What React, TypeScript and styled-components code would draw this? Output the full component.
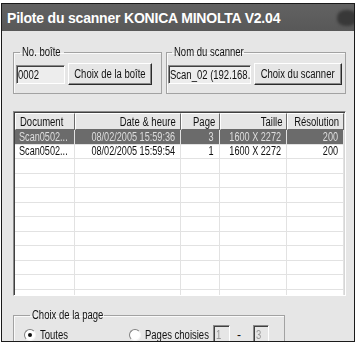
import styled, { createGlobalStyle } from 'styled-components';

const GlobalStyle = createGlobalStyle`
  html, body {
    margin: 0;
    padding: 0;
    background: #fff;
  }
  body {
    font-family: "Liberation Sans", Arial, sans-serif;
    color: #111;
  }
`;

// the dialog in the capture is squeezed sideways, so text is narrowed to match
const Txt = styled.span<{ $origin?: string }>`
  display: inline-block;
  white-space: nowrap;
  transform: scaleX(0.76);
  transform-origin: ${p => p.$origin ?? 'center'};
`;

const Window = styled.div`
  box-sizing: border-box;
  margin: 3px 0 0 1px;
  width: 354px;
  height: 339px;
  border: 1px solid #1a1a1a;
  background: #e6e6e6;
  overflow: hidden;
  display: flex;
  flex-direction: column;
`;

const TitleBar = styled.div`
  flex-shrink: 0;
  height: 27px;
  display: flex;
  align-items: center;
  padding-left: 5px;
  background: linear-gradient(#626262, #585858);
  color: #fff;
  font-family: "Liberation Sans Narrow", "Liberation Sans", Arial, sans-serif;
  font-weight: bold;
  font-size: 14px;
  letter-spacing: -0.2px;
`;

const TitleText = styled.span`
  flex: 1;
  white-space: nowrap;
`;

const CloseSpot = styled.span`
  width: 20px;
  height: 16px;
  margin-right: -3px;
  border-radius: 45%;
  background: #383838;
  filter: blur(1.5px);
`;

const Body = styled.div`
  display: flex;
  flex-direction: column;
  padding: 15px 8px 0 11px;
`;

const TopRow = styled.div`
  display: flex;
  gap: 4px;
`;

const Group = styled.fieldset<{ $w: number; $pad: string }>`
  box-sizing: border-box;
  width: ${p => p.$w}px;
  margin: 0;
  padding: ${p => p.$pad};
  border: 1px solid #a2a2a2;
  box-shadow: inset 1px 1px 0 #fafafa;
  display: flex;
  align-items: center;
  gap: 3px;
`;

const Legend = styled.legend<{ $w: number; $ml?: number }>`
  box-sizing: border-box;
  width: ${p => p.$w}px;
  margin-left: ${p => p.$ml ?? 4}px;
  padding: 0 2px;
  font-size: 12.5px;
  line-height: 12px;
  overflow: visible;
`;

const TextBox = styled.div<{ $w: number }>`
  box-sizing: border-box;
  width: ${p => p.$w}px;
  height: 19px;
  padding: 2px 0 0 1px;
  border-top: 1px solid #8a8a8a;
  border-left: 1px solid #8a8a8a;
  border-bottom: 1px solid #fff;
  border-right: 1px solid #fff;
  box-shadow: inset 1px 1px 0 #404040;
  background: #ededed;
  font-size: 12.5px;
  line-height: 14px;
  white-space: nowrap;
  overflow: hidden;
`;

const Button = styled.div<{ $w: number }>`
  box-sizing: border-box;
  width: ${p => p.$w}px;
  height: 22px;
  display: flex;
  align-items: center;
  justify-content: center;
  background: #e6e6e6;
  border-top: 1px solid #fff;
  border-left: 1px solid #fff;
  border-bottom: 1px solid #2a2a2a;
  border-right: 1px solid #2a2a2a;
  box-shadow: inset -1px -1px 0 #8a8a8a;
  font-size: 12.5px;
`;

const List = styled.div`
  box-sizing: border-box;
  margin-top: 17px;
  height: 185px;
  border-top: 1px solid #8a8a8a;
  border-left: 1px solid #8a8a8a;
  border-bottom: 1px solid #fff;
  border-right: 1px solid #fff;
  box-shadow: inset 1px 1px 0 #404040, inset -1px -1px 0 #d6d6d6;
  padding: 1px;
  background: #fff;
  overflow: hidden;
`;

const columns = '60px 106px 39px 67px 57px';

const HeaderRow = styled.div`
  display: grid;
  grid-template-columns: ${columns};
  height: 17px;
`;

const HeaderCell = styled.div<{ $left?: boolean }>`
  box-sizing: border-box;
  display: flex;
  align-items: center;
  justify-content: ${p => (p.$left ? 'flex-start' : 'flex-end')};
  padding: 0 4px 0 4px;
  background: #e6e6e6;
  border-top: 1px solid #fff;
  border-left: 1px solid #fff;
  border-right: 1px solid #6a6a6a;
  border-bottom: 1px solid #6a6a6a;
  font-size: 12.5px;
`;

const Row = styled.div<{ $selected?: boolean }>`
  display: grid;
  grid-template-columns: ${columns};
  height: 14.5px;
  background: ${p => (p.$selected ? '#6b6b6b' : '#fff')};
  color: ${p => (p.$selected ? '#dedede' : '#111')};
`;

const Cell = styled.div<{ $left?: boolean }>`
  box-sizing: border-box;
  display: flex;
  align-items: center;
  justify-content: ${p => (p.$left ? 'flex-start' : 'flex-end')};
  padding: ${p => (p.$left ? '0 0 0 4px' : '0 5px 0 0')};
  border-right: 1px solid #e2e2e2;
  border-bottom: 1px solid #e2e2e2;
  font-size: 12px;
  overflow: hidden;
`;

const PageGroup = styled.fieldset`
  box-sizing: border-box;
  width: 272px;
  margin: 13px 0 0 0;
  padding: 4px 8px 6px 10px;
  border: 1px solid #a2a2a2;
  box-shadow: inset 1px 1px 0 #fafafa;
  display: flex;
  align-items: center;
`;

const RadioOption = styled.label<{ $w: number }>`
  display: flex;
  align-items: center;
  gap: 4px;
  width: ${p => p.$w}px;
  font-size: 12.5px;
`;

const RadioCircle = styled.span<{ $checked?: boolean }>`
  box-sizing: border-box;
  flex-shrink: 0;
  width: 12px;
  height: 12px;
  border-radius: 50%;
  border: 1px solid #808080;
  border-right-color: #f4f4f4;
  border-bottom-color: #f4f4f4;
  background: #fff;
  display: flex;
  align-items: center;
  justify-content: center;
  &::after {
    content: '';
    width: 4px;
    height: 4px;
    border-radius: 50%;
    background: ${p => (p.$checked ? '#111' : 'transparent')};
  }
`;

const PageBox = styled.div<{ $w: number }>`
  box-sizing: border-box;
  width: ${p => p.$w}px;
  height: 20px;
  margin-left: 6px;
  padding: 2px 0 0 2px;
  border-top: 1px solid #8a8a8a;
  border-left: 1px solid #8a8a8a;
  border-bottom: 1px solid #fff;
  border-right: 1px solid #fff;
  box-shadow: inset 1px 1px 0 #404040;
  background: #e6e6e6;
  color: #9a9a9a;
  font-size: 12.5px;
  line-height: 14px;
`;

const Dash = styled.span`
  margin-left: 7px;
  margin-right: 6px;
  font-size: 12px;
`;

type Doc = {
  name: string;
  date: string;
  pages: number;
  size: string;
  dpi: number;
};

const docs: Doc[] = [
  { name: 'Scan0502...', date: '08/02/2005 15:59:36', pages: 3, size: '1600 X 2272', dpi: 200 },
  { name: 'Scan0502...', date: '08/02/2005 15:59:54', pages: 1, size: '1600 X 2272', dpi: 200 },
];

const headers = ['Document', 'Date & heure', 'Page', 'Taille', 'Résolution'];

export default function App() {
  const empty = Array.from({ length: 11 });

  return (
    <>
      <GlobalStyle />
      <Window>
        <TitleBar>
          <TitleText>Pilote du scanner KONICA MINOLTA V2.04</TitleText>
          <CloseSpot />
        </TitleBar>
        <Body>
          <TopRow>
            <Group $w={149} $pad="5px 8px 8px 2px">
              <Legend $w={44}>
                <Txt $origin="left">No. boîte</Txt>
              </Legend>
              <TextBox $w={49}>
                <Txt $origin="left">0002</Txt>
              </TextBox>
              <Button $w={84}>
                <Txt>Choix de la boîte</Txt>
              </Button>
            </Group>
            <Group $w={180} $pad="5px 2px 8px 1px">
              <Legend $w={72}>
                <Txt $origin="left">Nom du scanner</Txt>
              </Legend>
              <TextBox $w={83}>
                <Txt $origin="left">Scan_02 (192.168.</Txt>
              </TextBox>
              <Button $w={88}>
                <Txt>Choix du scanner</Txt>
              </Button>
            </Group>
          </TopRow>

          <List>
            <HeaderRow>
              {headers.map((h, i) => (
                <HeaderCell key={h} $left={i === 0}>
                  <Txt $origin={i === 0 ? 'left' : 'right'}>{h}</Txt>
                </HeaderCell>
              ))}
            </HeaderRow>
            {docs.map((d, i) => (
              <Row key={i} $selected={i === 0}>
                <Cell $left>
                  <Txt $origin="left">{d.name}</Txt>
                </Cell>
                <Cell>
                  <Txt $origin="right">{d.date}</Txt>
                </Cell>
                <Cell>
                  <Txt $origin="right">{d.pages}</Txt>
                </Cell>
                <Cell>
                  <Txt $origin="right">{d.size}</Txt>
                </Cell>
                <Cell>
                  <Txt $origin="right">{d.dpi}</Txt>
                </Cell>
              </Row>
            ))}
            {empty.map((_, i) => (
              <Row key={`e${i}`}>
                <Cell />
                <Cell />
                <Cell />
                <Cell />
                <Cell />
              </Row>
            ))}
          </List>

          <PageGroup>
            <Legend $w={74} $ml={6}>
              <Txt $origin="left">Choix de la page</Txt>
            </Legend>
            <RadioOption $w={105}>
              <RadioCircle $checked />
              <Txt $origin="left">Toutes</Txt>
            </RadioOption>
            <RadioOption $w={78}>
              <RadioCircle />
              <Txt $origin="left">Pages choisies</Txt>
            </RadioOption>
            <PageBox $w={17}>
              <Txt $origin="left">1</Txt>
            </PageBox>
            <Dash>-</Dash>
            <PageBox $w={16}>
              <Txt $origin="left">3</Txt>
            </PageBox>
          </PageGroup>
        </Body>
      </Window>
    </>
  );
}
